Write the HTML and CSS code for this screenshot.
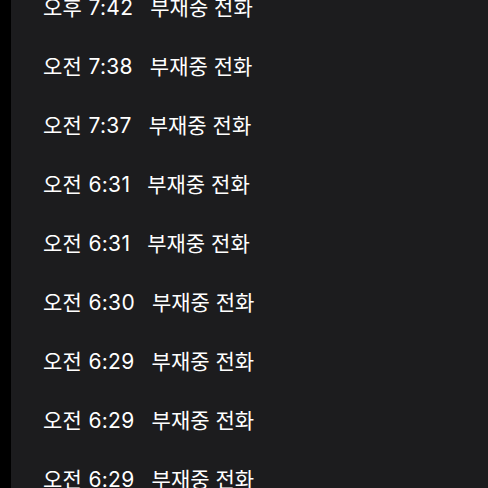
FILE: index.html
```html
<html>
	<head>
		<title>통화 기록</title>
		<meta charset="utf-8">
		<link rel="stylesheet" href="styles.css">
	</head>
	<body>
		<div class="edge"></div>
		<div class="sheet">
			<ul class="calls">
				<li class="call"><span class="time">오후 7:42</span><span class="label">부재중 전화</span></li>
				<li class="call"><span class="time">오전 7:38</span><span class="label">부재중 전화</span></li>
				<li class="call"><span class="time">오전 7:37</span><span class="label">부재중 전화</span></li>
				<li class="call"><span class="time">오전 6:31</span><span class="label">부재중 전화</span></li>
				<li class="call"><span class="time">오전 6:31</span><span class="label">부재중 전화</span></li>
				<li class="call"><span class="time">오전 6:30</span><span class="label">부재중 전화</span></li>
				<li class="call"><span class="time">오전 6:29</span><span class="label">부재중 전화</span></li>
				<li class="call"><span class="time">오전 6:29</span><span class="label">부재중 전화</span></li>
				<li class="call"><span class="time">오전 6:29</span><span class="label">부재중 전화</span></li>
			</ul>
		</div>
	</body>
</html>
```
FILE: styles.css
```css
html, body {
	margin: 0;
	height: 100%;
	overflow: hidden;
}

body {
	display: flex;
	background-color: #000;
	font-family: "Inter", "Noto Sans CJK KR", sans-serif;
}

.edge {
	width: 11px;
	flex-shrink: 0;
	background-color: #000;
}

.sheet {
	flex: 1;
	background-color: #1c1c1e;
	overflow: hidden;
}

.calls {
	list-style: none;
	margin: -24px 0 0 0;
	padding: 0 0 0 32px;
}

.call {
	display: flex;
	align-items: center;
	height: 59px;
	font-size: 21px;
	color: #fff;
}

.time {
	margin-right: 17px;
	letter-spacing: 0.3px;
}
```
